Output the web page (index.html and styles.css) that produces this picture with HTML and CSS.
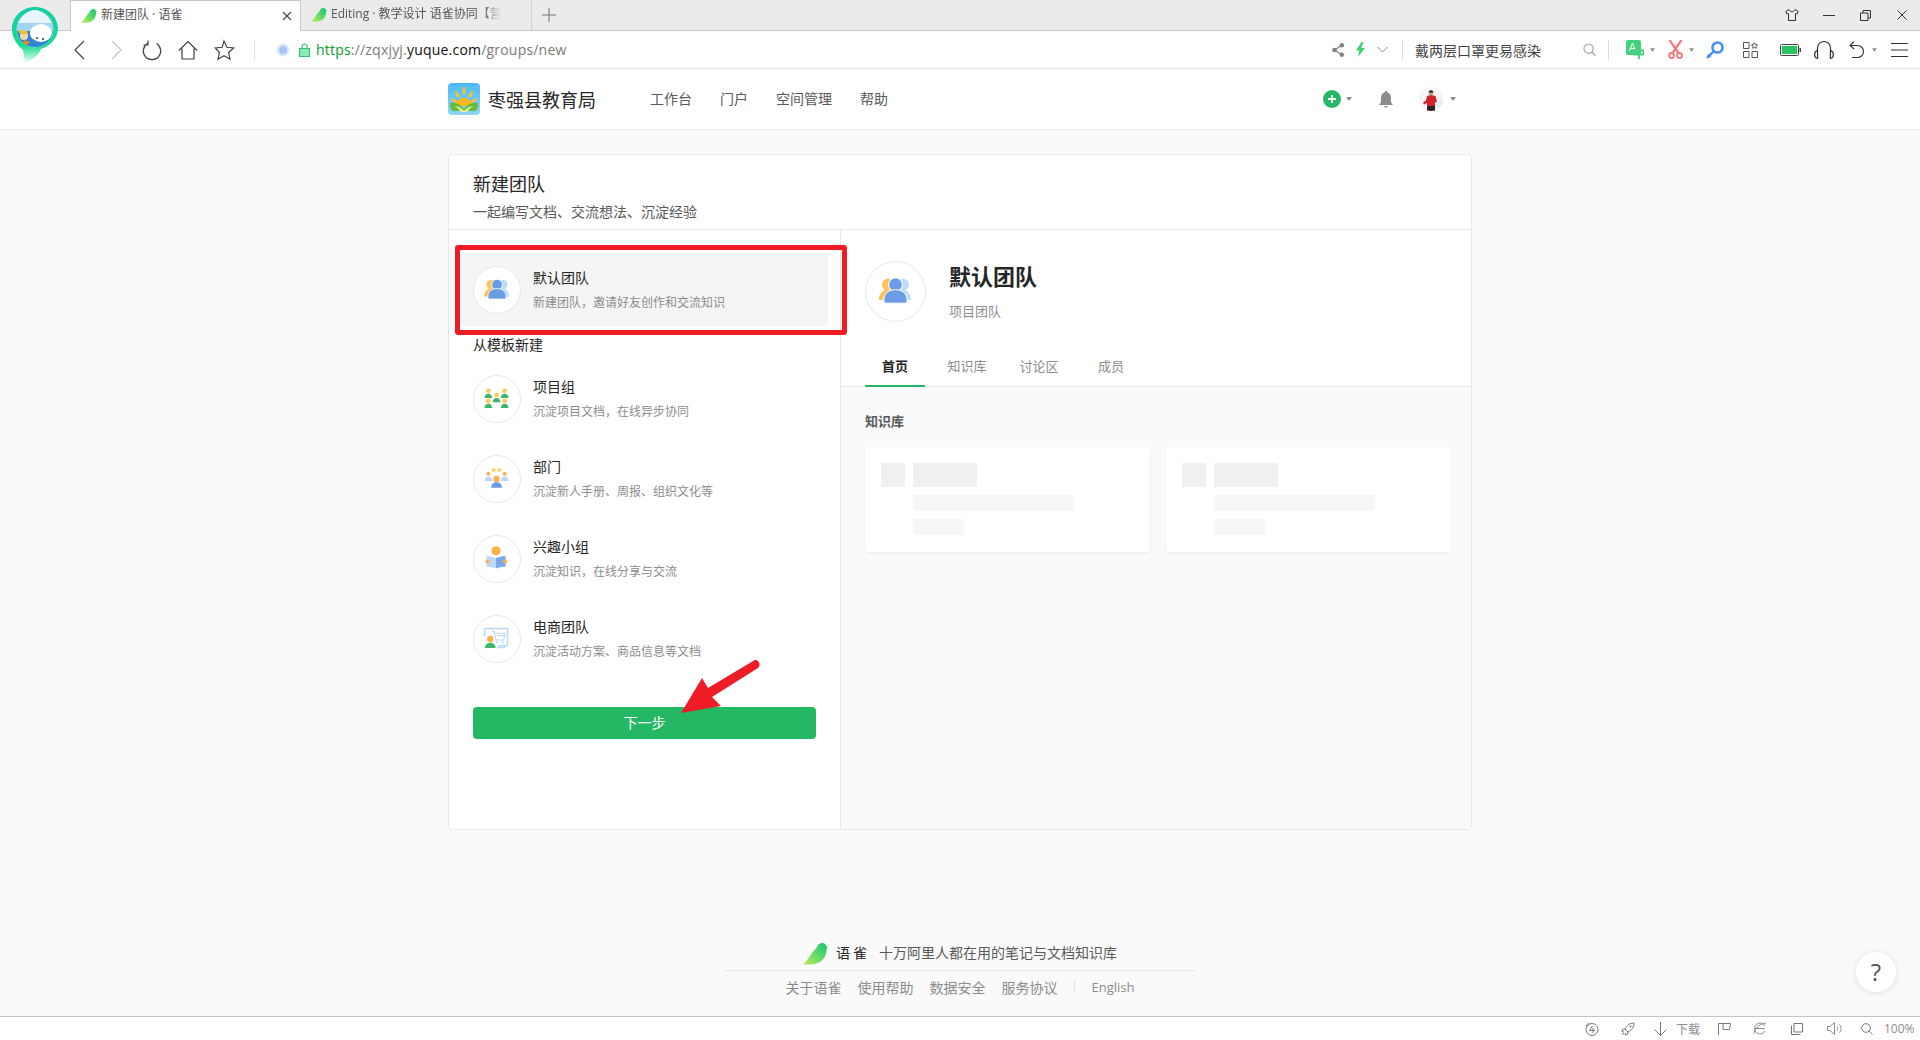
FILE: index.html
```html
<!DOCTYPE html>
<html lang="zh-CN">
<head>
<meta charset="utf-8">
<title>新建团队 · 语雀</title>
<link rel="stylesheet" href="styles.css">
</head>
<body>
<svg class="defs" width="0" height="0" aria-hidden="true">
  <defs>
    <linearGradient id="birdg" x1="0" y1="1" x2="1" y2="0">
      <stop offset="0" stop-color="#bdee55"/><stop offset=".5" stop-color="#63da68"/><stop offset="1" stop-color="#14bf7c"/>
    </linearGradient>
    <linearGradient id="ringg" x1="0" y1="0" x2="0" y2="1">
      <stop offset="0" stop-color="#12cfa8"/><stop offset=".7" stop-color="#18dc8e"/><stop offset="1" stop-color="#e6fbf0"/>
    </linearGradient>
    <symbol id="bird" viewBox="0 0 25 22">
      <path fill="url(#birdg)" d="M0 21.500C4 19 8 10 13.500 5 14 2 16.500 0 19.500 0c2 0 3.500 1.500 4 3.200L25 4.500 23.700 5C24 12 20 18 15 20c-5 2-10 1.500-15 1.500z"/>
    </symbol>
    <symbol id="caret" viewBox="0 0 6 4"><path fill="#8c8c8c" d="M0 0h6L3 4z"/></symbol>
    <symbol id="team" viewBox="0 0 48 48">
      <circle cx="18" cy="18.500" r="5" fill="#ffc25e"/>
      <path fill="#ffc25e" d="M10.500 31c0-5 2.500-8 7-9h4l-8 9z"/>
      <circle cx="30" cy="18.500" r="5" fill="#bcdbfb"/>
      <path fill="#bcdbfb" d="M36.500 31c0-5-2.500-8-7-9h-4l8 9z"/>
      <circle cx="24" cy="18.500" r="6" fill="#fff"/>
      <circle cx="24" cy="18.500" r="5.200" fill="#6a9de6"/>
      <path fill="#6a9de6" stroke="#fff" stroke-width=".8" d="M14.500 31.500c0-6 4-9 9.500-9s9.500 3 9.500 9c0 1-1 2-2 2H16.500c-1 0-2-1-2-2z"/>
    </symbol>
  </defs>
</svg>

<div class="logo-pin">
  <svg width="46" height="56" viewBox="0 0 46 56">
    <path fill="url(#ringg)" d="M23 0C10 0 0 10 0 22c0 9 5 16 11 21l2 12c7-1 13-6 16-13 9-3 17-11 17-20C46 10 36 0 23 0z"/>
    <circle cx="23" cy="22" r="18.500" fill="#9fd4f2"/>
    <path fill="#e9f6fb" d="M6 16c4-8 11-13 17-13s13 5 17 13z"/>
    <path fill="#2f86cf" d="M5 24h36c-1 9-8 16-18 16S6 33 5 24z"/>
    <circle cx="12" cy="29" r="4" fill="#f6d6a8"/>
    <path fill="#f2c12e" d="M6 23l9 1 1 3-8 0z"/>
    <path fill="#e8862c" d="M12 33l6 2-3 3-4-2z"/>
    <ellipse cx="29" cy="26" rx="11" ry="9" fill="#fff"/>
    <circle cx="25" cy="31" r="1" fill="#333"/><circle cx="31" cy="32" r="1" fill="#333"/>
  </svg>
</div>

<header class="tabstrip">
  <div class="tab tab-active">
    <svg class="tab-bird"><use href="#bird"/></svg>
    <span class="tab-title">新建团队 · 语雀</span>
    <svg class="tab-close" viewBox="0 0 10 10"><path d="M1 1l8 8M9 1l-8 8" stroke="#444" stroke-width="1.100" fill="none"/></svg>
  </div>
  <div class="tab">
    <svg class="tab-bird"><use href="#bird"/></svg>
    <span class="tab-title tab-fade">Editing · 教学设计 语雀协同【营</span>
  </div>
  <svg class="tab-new" viewBox="0 0 14 14"><path d="M7 0v14M0 7h14" stroke="#777" stroke-width="1.100"/></svg>
  <div class="winctl">
    <svg class="wc-shirt" viewBox="0 0 14 12"><path d="M4 .5L.8 2.300l1 2.700 1.700-.5v7h7v-7l1.700.5 1-2.700L10 .5C9.500 2 8 2.800 7 2.800S4.500 2 4 .5z" fill="none" stroke="#333"/></svg>
    <svg class="wc-min" viewBox="0 0 12 12"><path d="M0 6.500h12" stroke="#333"/></svg>
    <svg class="wc-max" viewBox="0 0 11 11"><path d="M.5 3h7.500v7.500H.5zM3 3V.5h7.500V8H8" fill="none" stroke="#333"/></svg>
    <svg class="wc-close" viewBox="0 0 10 10"><path d="M.5.500l9 9M9.500.500l-9 9" stroke="#333" fill="none"/></svg>
  </div>
</header>

<nav class="toolbar">
  <svg class="tb-cell" viewBox="0 0 36 24"><path d="M22 3L13 12l9 9" fill="none" stroke="#444" stroke-width="1.200"/></svg>
  <svg class="tb-cell" viewBox="0 0 36 24"><path d="M14 3l9 9-9 9" fill="none" stroke="#c4c4c4" stroke-width="1.200"/></svg>
  <svg class="tb-cell" viewBox="0 0 36 24"><path d="M13.500 5.500a8.700 8.700 0 1 0 9 0M14 2.500v4.500H9.500" fill="none" stroke="#444" stroke-width="1.200"/></svg>
  <svg class="tb-cell" viewBox="0 0 36 24"><path d="M9 12.500L18 3.500l9 9M12 10.500V21h12V10.500" fill="none" stroke="#444" stroke-width="1.200"/></svg>
  <svg class="tb-cell" viewBox="0 0 36 24"><path d="M18 3l2.800 6.300 6.900.7-5.200 4.500 1.500 6.700-6-3.500-6 3.500 1.500-6.700L9.300 10l6.900-.7z" fill="none" stroke="#444" stroke-width="1.200"/></svg>
  <span class="tb-sep tb-sep-a"></span>
  <svg class="tb-globe" viewBox="0 0 14 14"><circle cx="7" cy="7" r="6.500" fill="#dbe7fd"/><circle cx="7" cy="7" r="4" fill="#a9c4f8"/></svg>
  <svg class="tb-lock" viewBox="0 0 11 14"><path d="M3 6V3.500a2.500 2.500 0 0 1 5 0V6" fill="none" stroke="#3ac47d" stroke-width="1.200"/><rect x=".5" y="5.500" width="10" height="8" fill="#8be8b4" stroke="#2fbf73"/></svg>
  <div class="url"><span class="u-green">https</span><span class="u-gray">://zqxjyj.</span><span class="u-dark">yuque.com</span><span class="u-gray">/groups/new</span></div>

  <svg class="tr-share" viewBox="0 0 12 14"><circle cx="2.500" cy="7" r="2.300" fill="#808080"/><circle cx="9.800" cy="2.300" r="2.200" fill="#808080"/><circle cx="9.800" cy="11.700" r="2.200" fill="#808080"/><path d="M2.500 7l7.300-4.700M2.500 7l7.300 4.700" stroke="#808080" stroke-width="1.200"/></svg>
  <svg class="tr-bolt" viewBox="0 0 9 15"><path d="M5.500 0L0 8.500h3.300L2 15l7-9H5.300L7.500 0z" fill="#3ad56d"/></svg>
  <svg class="tr-chev" viewBox="0 0 11 7"><path d="M.5 1l5 5 5-5" fill="none" stroke="#8c8c8c"/></svg>
  <span class="tb-sep tr-sep1"></span>
  <div class="tb-search">戴两层口罩更易感染</div>
  <svg class="tr-find" viewBox="0 0 14 14"><circle cx="6" cy="6" r="5" fill="none" stroke="#9a9a9a" stroke-width="1.100"/><path d="M9.500 9.500l4 4" stroke="#9a9a9a" stroke-width="1.200"/></svg>
  <span class="tb-sep tr-sep2"></span>
  <svg class="tr-trans" viewBox="0 0 18 20"><rect width="15" height="15" rx="2" fill="#43d17d"/><path d="M3.500 11l3-8 3 8M4.700 8.500h4" fill="none" stroke="#fff"/><path d="M8.500 10.500h9v4h-9zM13 8v11" fill="none" stroke="#43d17d" stroke-width="1.800"/></svg>
  <svg class="tr-caret"><use href="#caret"/></svg>
  <svg class="tr-sciss" viewBox="0 0 15 19"><path d="M1.500 0L10.500 13M13.500 0L4.500 13" stroke="#f47a78" stroke-width="2.200"/><circle cx="3.500" cy="15.500" r="2.500" fill="none" stroke="#f47a78" stroke-width="1.800"/><circle cx="11.500" cy="15.500" r="2.500" fill="none" stroke="#f47a78" stroke-width="1.800"/></svg>
  <svg class="tr-caret tr-caret-b"><use href="#caret"/></svg>
  <svg class="tr-key" viewBox="0 0 18 18"><circle cx="11.500" cy="6.500" r="5" fill="none" stroke="#4a8df6" stroke-width="2.600"/><path d="M8 10L1 17M2 13.500l2.500 2.500" stroke="#4a8df6" stroke-width="2.400" fill="none"/></svg>
  <svg class="tr-apps" viewBox="0 0 15 16"><path d="M.5.500h5.500v6H.5zM.5 9.500h5.500v6H.5zM9 9.500h5.500v6H9z" fill="none" stroke="#555"/><path d="M11.500.800l1 1.700 2 .3-1.500 1.500.3 2-1.800-1-1.800 1 .3-2L8.500 2.800l2-.3z" fill="none" stroke="#555"/></svg>
  <svg class="tr-batt" viewBox="0 0 21 12"><rect x=".5" y=".5" width="18" height="11" rx="1" fill="none" stroke="#444"/><rect x="2" y="2" width="15" height="8" fill="#27c75f"/><rect x="19.500" y="4" width="1.500" height="4" fill="#444"/></svg>
  <svg class="tr-head" viewBox="0 0 20 19"><path d="M3.500 11V8a6.500 6.500 0 0 1 13 0v3" fill="none" stroke="#333" stroke-width="1.200"/><path d="M3.500 10.500C1.500 11 .6 12.500.6 14.500s1 3.500 3 4zM16.500 10.500c2 .5 2.900 2 2.900 4s-1 3.500-3 4z" fill="none" stroke="#333" stroke-width="1.200"/></svg>
  <svg class="tr-undo" viewBox="0 0 15 17"><path d="M5 .5L1 4.500l4 3.500M1 4.500h7.500a6 6 0 0 1 0 12H3" fill="none" stroke="#333" stroke-width="1.100"/></svg>
  <svg class="tr-caret tr-caret-c"><use href="#caret"/></svg>
  <svg class="tr-menu" viewBox="0 0 17 14"><path d="M0 .5h17M0 7h17M0 13.500h17" stroke="#333"/></svg>
</nav>

<header class="sitebar">
  <svg class="org-logo" viewBox="0 0 32 32">
    <defs><linearGradient id="skyg" x1="0" y1="0" x2="0" y2="1"><stop offset="0" stop-color="#4bb9f7"/><stop offset="1" stop-color="#8fd6f5"/></linearGradient></defs>
    <rect width="32" height="32" rx="4" fill="url(#skyg)"/>
    <path d="M15 4l2 0 .5 7h-3zM6.500 9l2-1 3.500 5.500-2 1.500zM25.500 9l-2-1-3.500 5.500 2 1.500zM3 17l1-2 5 3-1 2zM29 17l-1-2-5 3 1 2z" fill="#fdc31d"/>
    <path d="M8 23a8 8 0 0 1 16 0z" fill="#fdb913"/>
    <path d="M2 20c6-1 10 1 14 6 4-5 8-7 14-6 0 4-1 7-3 8H5c-2-1-3-4-3-8z" fill="#6ab936"/>
    <path d="M6 23c4 0 7 1.500 10 5 3-3.500 6-5 10-5-3 1-5 3-6.500 6h-7C11 26 9 24 6 23z" fill="#d6f2a0"/>
  </svg>
  <span class="org-name">枣强县教育局</span>
  <ul class="sitenav">
    <li>工作台</li><li>门户</li><li>空间管理</li><li>帮助</li>
  </ul>
  <div class="siteact">
    <svg class="sa-plus" viewBox="0 0 18 18"><circle cx="9" cy="9" r="9" fill="#25b864"/><path d="M9 5v8M5 9h8" stroke="#fff" stroke-width="1.800"/></svg>
    <svg class="sa-caret"><use href="#caret"/></svg>
    <svg class="sa-bell" viewBox="0 0 14 17"><path d="M7 0c1 0 1.500.7 1.500 1.500C11 2.300 12 4.500 12 7v4l2 3H0l2-3V7c0-2.500 1-4.700 3.500-5.500C5.500.7 6 0 7 0zM5 15h4l-2 2z" fill="#8c8c8c"/></svg>
    <svg class="sa-user" viewBox="0 0 24 24">
      <clipPath id="uclip"><circle cx="12" cy="12" r="12"/></clipPath>
      <g clip-path="url(#uclip)">
        <rect width="24" height="24" fill="#f4f5f5"/>
        <path d="M17 14h7v6h-7z" fill="#dff0ee"/>
        <circle cx="12" cy="6" r="2.300" fill="#c99a80"/>
        <path d="M9.700 5.500a2.300 2.300 0 0 1 4.600 0z" fill="#222"/>
        <path d="M8 9l4-1 4.500 1 1.500 6-2 .5 0 3.500H8v-3l-3 1.500-1-2 3-2z" fill="#d2232a"/>
        <path d="M8 19h8v5H8z" fill="#2b2323"/>
      </g>
    </svg>
    <svg class="sa-caret"><use href="#caret"/></svg>
  </div>
</header>

<main class="page">
  <section class="card">
    <div class="card-head">
      <h1>新建团队</h1>
      <p>一起编写文档、交流想法、沉淀经验</p>
    </div>
    <div class="card-body">
      <div class="picker">
        <div class="item item-on">
          <span class="ava"><svg class="ava-ico"><use href="#team"/></svg></span>
          <div class="item-text"><b>默认团队</b><small>新建团队，邀请好友创作和交流知识</small></div>
        </div>
        <div class="picker-head">从模板新建</div>
        <div class="item">
          <span class="ava">
            <svg class="ava-ico" viewBox="0 0 48 48">
              <g fill="#ffcb52"><circle cx="15" cy="15.500" r="2.500"/><circle cx="32" cy="15.500" r="2.500"/><circle cx="23.500" cy="20" r="2.500"/><circle cx="15" cy="26" r="2.500"/><circle cx="32" cy="26" r="2.500"/></g>
              <g fill="#3db56f"><path d="M11 23c0-3 2-4.500 4-4.500s4 1.500 4 4.500zM28 23c0-3 2-4.500 4-4.500s4 1.500 4 4.500zM19.500 27.500c0-3 2-4.500 4-4.500s4 1.500 4 4.500zM11 33.500c0-3 2-4.500 4-4.500s4 1.500 4 4.500zM28 33.500c0-3 2-4.500 4-4.500s4 1.500 4 4.500z"/></g>
            </svg>
          </span>
          <div class="item-text"><b>项目组</b><small>沉淀项目文档，在线异步协同</small></div>
        </div>
        <div class="item">
          <span class="ava">
            <svg class="ava-ico" viewBox="0 0 48 48">
              <g fill="#ffd35c"><circle cx="20.500" cy="14.500" r="2"/><circle cx="26.500" cy="14.500" r="2"/></g>
              <g fill="#ffb04c"><circle cx="15" cy="18.500" r="2"/><circle cx="32" cy="18.500" r="2"/><circle cx="23.500" cy="24" r="3.300"/></g>
              <g fill="#bcd8f8"><path d="M11 26c0-3 2-4.500 4-4.500s4 1.500 4 4.500zM28 26c0-3 2-4.500 4-4.500s4 1.500 4 4.500z"/></g>
              <path d="M18 33c0-4 2.500-5.500 5.500-5.500S29 29 29 33z" fill="#6a9de6"/>
            </svg>
          </span>
          <div class="item-text"><b>部门</b><small>沉淀新人手册、周报、组织文化等</small></div>
        </div>
        <div class="item">
          <span class="ava">
            <svg class="ava-ico" viewBox="0 0 48 48">
              <circle cx="23" cy="15.500" r="4.800" fill="#ffb04c"/>
              <path d="M13 21c4 0 7.500.5 10 2v11c-2.500-1.500-6-2-10-2z" fill="#bcd8f8"/>
              <path d="M33 21c-4 0-7.500.5-10 2v11c2.500-1.500 6-2 10-2z" fill="#7aa8e8"/>
              <circle cx="14" cy="26.500" r="2.100" fill="#ffb04c"/><circle cx="32.500" cy="26.500" r="2.100" fill="#ffb04c"/>
            </svg>
          </span>
          <div class="item-text"><b>兴趣小组</b><small>沉淀知识，在线分享与交流</small></div>
        </div>
        <div class="item">
          <span class="ava">
            <svg class="ava-ico" viewBox="0 0 48 48">
              <path d="M11 13h24v18H25" fill="none" stroke="#bcd8f8" stroke-width="1.600"/>
              <path d="M11 13v8" stroke="#bcd8f8" stroke-width="1.600"/>
              <path d="M19 16h2l2 9h8l1.500-7H21.500M24 20.500h8" fill="none" stroke="#bcd8f8" stroke-width="1.200"/>
              <circle cx="24" cy="27.500" r="1.200" fill="#bcd8f8"/><circle cx="30" cy="27.500" r="1.200" fill="#bcd8f8"/>
              <path d="M24 33h9" stroke="#bcd8f8" stroke-width="1.300"/>
              <circle cx="17" cy="24" r="3.300" fill="#ffb04c"/>
              <path d="M11.500 33.500c0-4 2.500-5.500 5.500-5.500s5.500 1.500 5.500 5.500z" fill="#3db56f"/>
            </svg>
          </span>
          <div class="item-text"><b>电商团队</b><small>沉淀活动方案、商品信息等文档</small></div>
        </div>
        <button class="next" type="button">下一步</button>
        <div class="callout"></div>
        <svg class="callout-arrow" viewBox="0 0 80 56"><path fill="#ee1c25" d="M1 53L22 18l6 10L74 .500c2-1 4 0 5 2s.5 4-1 5.500L32 37l9 9z"/></svg>
      </div>

      <div class="preview">
        <div class="pv-head">
          <div class="pv-id">
            <span class="ava ava-lg"><svg class="ava-ico-lg"><use href="#team"/></svg></span>
            <div class="pv-text"><h2>默认团队</h2><p>项目团队</p></div>
          </div>
          <ul class="pv-tabs">
            <li class="pv-on">首页</li><li>知识库</li><li>讨论区</li><li>成员</li>
          </ul>
        </div>
        <div class="pv-body">
          <h3>知识库</h3>
          <div class="sk-grid">
            <div class="sk-card">
              <span class="sk sk-sq"></span>
              <div class="sk-col"><span class="sk sk-title"></span><span class="sk sk-l sk-long"></span><span class="sk sk-l sk-short"></span></div>
            </div>
            <div class="sk-card">
              <span class="sk sk-sq"></span>
              <div class="sk-col"><span class="sk sk-title"></span><span class="sk sk-l sk-long"></span><span class="sk sk-l sk-short"></span></div>
            </div>
          </div>
        </div>
      </div>
    </div>
  </section>

  <footer class="foot">
    <div class="foot-brand">
      <svg class="foot-bird"><use href="#bird"/></svg>
      <strong>语雀</strong>
      <span>十万阿里人都在用的笔记与文档知识库</span>
    </div>
    <div class="foot-links">
      <a>关于语雀</a><a>使用帮助</a><a>数据安全</a><a>服务协议</a><i></i><a class="foot-en">English</a>
    </div>
  </footer>
  <div class="help">?</div>
</main>

<footer class="status">
  <svg class="st-a" viewBox="0 0 14 14"><circle cx="7" cy="7.500" r="6" fill="none" stroke="#777"/><path d="M7.500 4L4.500 8.500H10M8 6v5M1 4L4 .5" fill="none" stroke="#777"/></svg>
  <svg class="st-b" viewBox="0 0 14 14"><path d="M13 1c-4 0-7 2-9 6l3 3c4-2 6-5 6-9zM4 7L1.500 7.500 1 9.500l2 .5M7 10l-.5 2.500-2 .5-.5-2M3 11l-2 2" fill="none" stroke="#777"/><circle cx="9.500" cy="4.500" r="1" fill="#777"/></svg>
  <svg class="st-c" viewBox="0 0 13 14"><path d="M6.500 0v13M.5 7.500l6 6 6-6" fill="none" stroke="#777"/></svg>
  <span class="st-dl">下载</span>
  <svg class="st-d" viewBox="0 0 13 12"><path d="M.5 12V.5h12l-1 6H5V.5" fill="none" stroke="#777"/></svg>
  <svg class="st-e" viewBox="0 0 14 13"><path d="M1.500 6.500h10M12 9a5.500 5.500 0 1 1 0-5M1 12c0-4 4-10 12-11" fill="none" stroke="#8c8c8c"/></svg>
  <svg class="st-f" viewBox="0 0 12 12"><path d="M.5 2.500v9h9M3 .5h8.500V9H3z" fill="none" stroke="#777"/></svg>
  <svg class="st-g" viewBox="0 0 15 13"><path d="M.5 4.500h2.500L7.500.5v12L3 8.500H.5zM10 4.500c1 1 1 3 0 4M12.500 2.500c2 2 2 6 0 8" fill="none" stroke="#8c8c8c"/></svg>
  <svg class="st-h" viewBox="0 0 12 12"><circle cx="5" cy="5" r="4.300" fill="none" stroke="#777"/><path d="M8 8l3.500 3.500" stroke="#777"/></svg>
  <span class="st-pct">100%</span>
</footer>
</body>
</html>
```

FILE: styles.css
```css
* { box-sizing: border-box; }
html, body { margin: 0; padding: 0; }
body {
  width: 1920px;
  height: 1040px;
  overflow: hidden;
  display: flex;
  flex-direction: column;
  position: relative;
  background: #fff;
  color: #262626;
  font-family: "Noto Sans CJK SC", "Open Sans", sans-serif;
  font-size: 14px;
}
svg { display: block; flex: none; }
.defs { position: absolute; }
ul { list-style: none; margin: 0; padding: 0; }
h1, h2, h3, p { margin: 0; font-weight: 400; }

.logo-pin { position: absolute; left: 12px; top: 7px; z-index: 5; }

/* tab strip */
.tabstrip {
  height: 31px;
  flex: none;
  display: flex;
  align-items: stretch;
  padding-left: 70px;
  background: #ebebeb;
  border-bottom: 1px solid #c8c8c8;
}
.tab {
  width: 231px;
  display: flex;
  align-items: center;
  padding-left: 10px;
  border-right: 1px solid #cfcfcf;
  font-size: 12px;
  color: #555;
  line-height: 30px;
}
.tab-active {
  background: #fff;
  height: 31px;
  border: 1px solid #c8c8c8;
  border-bottom: 0;
  color: #555;
}
.tab-bird { width: 16px; height: 14px; margin-right: 4px; }
.tab-title {
  white-space: nowrap;
  margin-bottom: 2px;
  font-family: "Open Sans", "Noto Sans CJK SC", sans-serif;
}
.tab-fade {
  -webkit-mask-image: linear-gradient(90deg, #000 88%, transparent);
  mask-image: linear-gradient(90deg, #000 88%, transparent);
}
.tab-close { width: 10px; height: 10px; margin-left: auto; margin-right: 8px; }
.tab-new { width: 14px; height: 14px; margin: 8px 0 0 10px; }
.winctl { margin-left: auto; display: flex; align-items: center; }
.wc-shirt { width: 14px; height: 12px; }
.wc-min { width: 12px; height: 12px; margin-left: 24px; }
.wc-max { width: 11px; height: 11px; margin-left: 25px; }
.wc-close { width: 10px; height: 10px; margin-left: 26px; margin-right: 13px; }

/* toolbar */
.toolbar {
  height: 38px;
  flex: none;
  display: flex;
  align-items: center;
  padding: 0 12px 0 62px;
  background: #fff;
  border-bottom: 1px solid #e3e3e3;
}
.tb-cell { width: 36px; height: 24px; }
.tb-sep { width: 1px; height: 20px; background: #dcdcdc; flex: none; }
.tb-sep-a { margin-left: 12px; }
.tb-globe { width: 14px; height: 14px; margin-left: 21px; }
.tb-lock { width: 11px; height: 14px; margin-left: 9px; }
.url { margin-left: 6px; font-family: "Open Sans", sans-serif; font-size: 14px; letter-spacing: .2px; white-space: nowrap; }
.u-green { color: #0a9a2e; }
.u-gray { color: #7a7a7a; }
.u-dark { color: #111; }
.tr-share { width: 12px; height: 14px; margin-left: auto; }
.tr-bolt { width: 9px; height: 15px; margin-left: 12px; }
.tr-chev { width: 11px; height: 7px; margin-left: 12px; }
.tr-sep1 { margin-left: 14px; }
.tb-search { width: 126px; margin-left: 12px; color: #444; font-size: 14px; white-space: nowrap; }
.tr-find { width: 13px; height: 13px; margin-left: 42px; }
.tr-sep2 { margin-left: 12px; }
.tr-trans { width: 18px; height: 20px; margin-left: 17px; }
.tr-caret { width: 5px; height: 4px; margin-left: 6px; }
.tr-sciss { width: 15px; height: 19px; margin-left: 13px; }
.tr-key { width: 18px; height: 18px; margin-left: 12px; }
.tr-apps { width: 15px; height: 16px; margin-left: 19px; }
.tr-batt { width: 21px; height: 12px; margin-left: 22px; }
.tr-head { width: 20px; height: 19px; margin-left: 13px; }
.tr-undo { width: 15px; height: 17px; margin-left: 15px; }
.tr-caret-c { margin-left: 8px; }
.tr-menu { width: 17px; height: 14px; margin-left: 14px; }

/* site bar */
.sitebar {
  height: 61px;
  flex: none;
  display: flex;
  align-items: center;
  padding-left: 448px;
  background: #fff;
  border-bottom: 1px solid #e8e8e8;
}
.org-logo { width: 32px; height: 32px; }
.org-name { margin-left: 8px; font-size: 18px; color: #262626; width: 106px; white-space: nowrap; }
.sitenav { display: flex; gap: 28px; margin-left: 56px; margin-bottom: 2px; color: #595959; font-size: 14px; }
.siteact { display: flex; align-items: center; margin-left: 435px; }
.sa-plus { width: 18px; height: 18px; }
.sa-caret { width: 6px; height: 4px; margin-left: 5px; }
.sa-bell { width: 14px; height: 17px; margin-left: 27px; }
.sa-user { width: 24px; height: 24px; margin-left: 26px; }
.sa-user + .sa-caret { margin-left: 7px; }

/* page */
.page {
  flex: 1;
  min-height: 0;
  display: flex;
  flex-direction: column;
  align-items: center;
  position: relative;
  padding-top: 24px;
  background: #fafafa;
}
.card {
  width: 1024px;
  height: 676px;
  flex: none;
  display: flex;
  flex-direction: column;
  background: #fff;
  border: 1px solid #e8e8e8;
  border-radius: 4px;
}
.card-head { height: 75px; flex: none; padding: 14px 24px 0; border-bottom: 1px solid #e8e8e8; }
.card-head h1 { font-size: 18px; line-height: 28px; color: #262626; }
.card-head p { font-size: 14px; line-height: 28px; color: #595959; }
.card-body { flex: 1; display: flex; min-height: 0; }

.picker {
  width: 392px;
  flex: none;
  position: relative;
  padding: 24px 24px 0;
  border-right: 1px solid #e8e8e8;
}
.item {
  height: 72px;
  margin: 0 -12px 8px;
  padding: 0 12px;
  display: flex;
  align-items: center;
  gap: 12px;
  border-radius: 4px;
}
.item-on { background: #f5f5f5; margin-bottom: 0; }
.ava {
  width: 48px;
  height: 48px;
  flex: none;
  display: block;
  background: #fff;
  border: 1px solid #e8e8e8;
  border-radius: 50%;
}
.ava-ico { width: 46px; height: 46px; }
.ava-lg { width: 61px; height: 61px; }
.ava-ico-lg { width: 59px; height: 59px; }
.item-text { display: flex; flex-direction: column; padding-bottom: 1px; }
.item-text b { font-weight: 400; font-size: 14px; line-height: 20px; color: #262626; }
.item-text small { font-size: 12px; line-height: 20px; margin-top: 5px; color: #8c8c8c; }
.picker-head { height: 37px; line-height: 36px; font-size: 14px; color: #262626; }
.next {
  display: block;
  width: 100%;
  height: 32px;
  margin-top: 32px;
  padding: 0 0 2px;
  border: 0;
  border-radius: 4px;
  background: #25b864;
  color: #fff;
  font-family: inherit;
  font-size: 14px;
}
.callout {
  position: absolute;
  left: 6px;
  top: 15px;
  width: 392px;
  height: 90px;
  border: 5px solid #ee1c25;
  border-radius: 3px;
  pointer-events: none;
}
.callout-arrow { position: absolute; left: 231px; top: 430px; width: 80px; height: 56px; }

.preview { flex: 1; min-width: 0; display: flex; flex-direction: column; background: #fafafa; }
.pv-head { flex: none; background: #fff; padding: 31px 24px 0; border-bottom: 1px solid #e8e8e8; }
.pv-id { display: flex; gap: 23px; }
.pv-text { margin-top: -2px; }
.pv-text h2 { font-size: 22px; line-height: 32px; font-weight: 700; color: #262626; }
.pv-text p { font-size: 13px; line-height: 20px; margin-top: 10px; color: #8c8c8c; }
.pv-tabs { display: flex; gap: 12px; margin-top: 25px; margin-bottom: -1px; }
.pv-tabs li { width: 60px; height: 40px; line-height: 38px; text-align: center; font-size: 13px; color: #8c8c8c; }
.pv-tabs .pv-on { color: #262626; font-weight: 700; border-bottom: 2px solid #25b864; }
.pv-body { padding: 24px 20px 0 24px; }
.pv-body h3 { font-size: 13px; line-height: 20px; font-weight: 700; color: #595959; }
.sk-grid { display: grid; grid-template-columns: 285px 285px; gap: 16px; margin-top: 16px; }
.sk-card {
  height: 105px;
  display: flex;
  gap: 8px;
  padding: 16px;
  background: #fff;
  border-radius: 4px;
  box-shadow: 0 1px 3px rgba(0, 0, 0, .07);
}
.sk { display: block; }
.sk-sq { width: 24px; height: 24px; background: #f0f0f0; }
.sk-col { display: flex; flex-direction: column; gap: 8px; }
.sk-title { width: 64px; height: 24px; background: #f0f0f0; }
.sk-l { height: 16px; background: #f7f7f7; }
.sk-long { width: 161px; }
.sk-short { width: 51px; }

.foot { width: 470px; margin-top: 113px; flex: none; }
.foot-brand {
  height: 28px;
  display: flex;
  align-items: flex-start;
  justify-content: center;
  border-bottom: 1px solid #e8e8e8;
  line-height: 19px;
}
.foot-bird { width: 25px; height: 22px; margin-right: 8px; }
.foot-brand strong { font-weight: 400; font-size: 14px; letter-spacing: 3px; color: #262626; width: 43px; }
.foot-brand span { font-size: 14px; color: #595959; }
.foot-links { display: flex; align-items: center; justify-content: center; gap: 16px; height: 32px; color: #8c8c8c; font-size: 14px; }
.foot-links i { width: 1px; height: 14px; background: #e3e3e3; }
.foot-en { font-family: "Open Sans", sans-serif; font-size: 13px; margin-left: 1px; }

.help {
  position: absolute;
  right: 24px;
  bottom: 24px;
  width: 40px;
  height: 40px;
  border-radius: 50%;
  background: #fff;
  box-shadow: 0 1px 6px rgba(0, 0, 0, .12);
  color: #555;
  font-family: "Open Sans", sans-serif;
  font-size: 24px;
  line-height: 40px;
  text-align: center;
}

/* status bar */
.status {
  height: 24px;
  flex: none;
  display: flex;
  align-items: center;
  padding-left: 1585px;
  background: #fff;
  border-top: 1px solid #c4c4c4;
  color: #8c8c8c;
  font-size: 12px;
}
.st-a { width: 14px; height: 14px; }
.st-b { width: 14px; height: 14px; margin-left: 22px; }
.st-c { width: 13px; height: 14px; margin-left: 19px; }
.st-dl { width: 24px; margin-left: 9px; white-space: nowrap; }
.st-d { width: 13px; height: 12px; margin-left: 18px; }
.st-e { width: 14px; height: 13px; margin-left: 22px; }
.st-f { width: 12px; height: 12px; margin-left: 24px; }
.st-g { width: 15px; height: 13px; margin-left: 24px; }
.st-h { width: 12px; height: 12px; margin-left: 19px; }
.st-pct { margin-left: 11px; font-family: "Open Sans", sans-serif; white-space: nowrap; }
```
